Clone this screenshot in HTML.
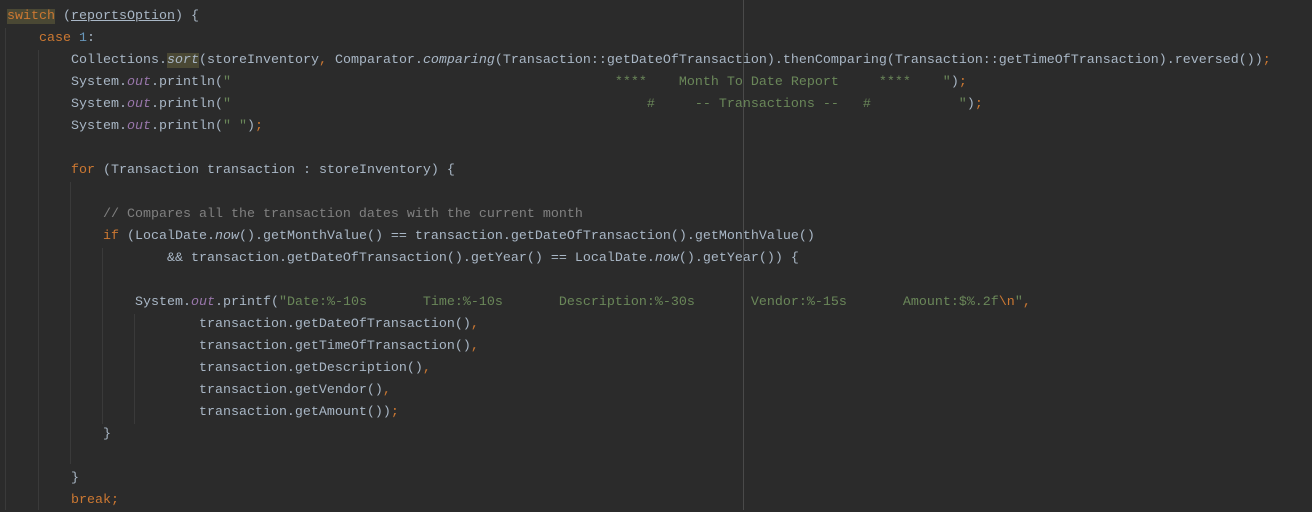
<!DOCTYPE html>
<html><head><meta charset="utf-8"><style>
html,body{margin:0;padding:0;background:#2b2b2b;width:1312px;height:510px;overflow:hidden}
pre{position:absolute;left:7px;top:6px;margin:0;font-family:"Liberation Mono",monospace;font-size:13.33px;line-height:22px;color:#a9b7c6}
.k{color:#cc7832}.n{color:#6897bb}.s{color:#6a8759}.f{color:#9876aa;font-style:italic}.i{font-style:italic}.c{color:#808080}
.hl{background:#4a4834}
.u{text-decoration:underline}
.g{position:absolute;width:1px;background:#3a3a3a}
.m{position:absolute;left:743px;top:0;width:1px;height:510px;background:#4a4a4a}
</style></head><body>
<div class="g" style="left:5px;top:28px;height:482px"></div>
<div class="g" style="left:38px;top:50px;height:460px"></div>
<div class="g" style="left:70px;top:182px;height:282px"></div>
<div class="g" style="left:102px;top:248px;height:176px"></div>
<div class="g" style="left:134px;top:314px;height:110px"></div>
<div class="m"></div>
<pre><span class="k hl">switch</span> (<span class="u">reportsOption</span>) {
    <span class="k">case </span><span class="n">1</span>:
        Collections.<span class="i hl">sort</span>(storeInventory<span class="k">, </span>Comparator.<span class="i">comparing</span>(Transaction::getDateOfTransaction).thenComparing(Transaction::getTimeOfTransaction).reversed())<span class="k">;</span>
        System.<span class="f">out</span>.println(<span class="s">"                                                ****    Month To Date Report     ****    "</span>)<span class="k">;</span>
        System.<span class="f">out</span>.println(<span class="s">"                                                    #     -- Transactions --   #           "</span>)<span class="k">;</span>
        System.<span class="f">out</span>.println(<span class="s">" "</span>)<span class="k">;</span>

        <span class="k">for </span>(Transaction transaction : storeInventory) {

            <span class="c">// Compares all the transaction dates with the current month</span>
            <span class="k">if </span>(LocalDate.<span class="i">now</span>().getMonthValue() == transaction.getDateOfTransaction().getMonthValue()
                    &amp;&amp; transaction.getDateOfTransaction().getYear() == LocalDate.<span class="i">now</span>().getYear()) {

                System.<span class="f">out</span>.printf(<span class="s">"Date:%-10s       Time:%-10s       Description:%-30s       Vendor:%-15s       Amount:$%.2f<span class="k">\n</span>"</span><span class="k">,</span>
                        transaction.getDateOfTransaction()<span class="k">,</span>
                        transaction.getTimeOfTransaction()<span class="k">,</span>
                        transaction.getDescription()<span class="k">,</span>
                        transaction.getVendor()<span class="k">,</span>
                        transaction.getAmount())<span class="k">;</span>
            }

        }
        <span class="k">break;</span></pre>
</body></html>
